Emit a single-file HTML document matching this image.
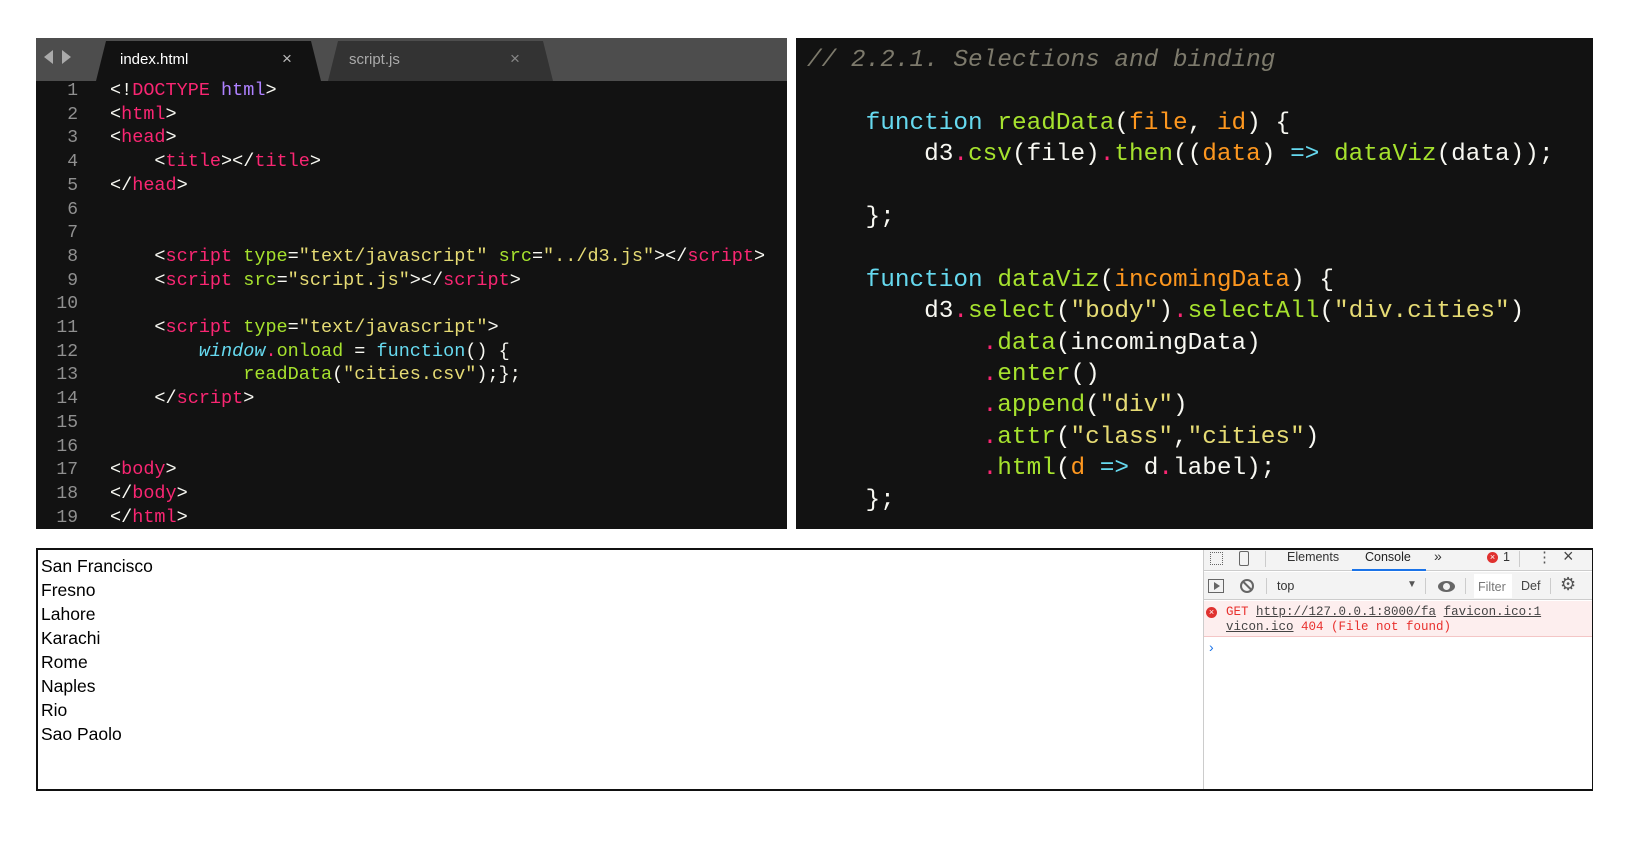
<!DOCTYPE html>
<html><head><style>
*{margin:0;padding:0;box-sizing:border-box}
body{width:1636px;height:844px;background:#fff;position:relative;overflow:hidden;font-family:"Liberation Sans",sans-serif}
.ed{position:absolute;background:#121212;overflow:hidden}
.l{position:absolute;white-space:pre;font-family:"Liberation Mono",monospace;color:#f8f8f2}
.n{position:absolute;white-space:pre;font-family:"Liberation Mono",monospace;color:#909090;text-align:right;width:40px}
.p{color:#f92672}.u{color:#ae81ff}.g{color:#a6e22e}.y{color:#e6db74}.c{color:#66d9ef}.o{color:#fd971f}.i{font-style:italic}
.dt{position:absolute;font-size:12.5px;color:#333;white-space:nowrap}
#D{position:absolute;left:0;top:0;width:1636px;height:844px;transform:translate(-6px,-2px)}
</style></head><body>
<div class="ed" style="left:36px;top:38px;width:751px;height:491px">
 <div style="position:absolute;left:0;top:0;width:751px;height:43px;background:#4d4d4d"></div>
 <div style="position:absolute;left:8px;top:12px;width:0;height:0;border-top:7px solid transparent;border-bottom:7px solid transparent;border-right:9px solid #aaa"></div>
 <div style="position:absolute;left:26px;top:12px;width:0;height:0;border-top:7px solid transparent;border-bottom:7px solid transparent;border-left:9px solid #aaa"></div>
 <div style="position:absolute;left:292px;top:3px;width:225px;height:40px;background:#333;clip-path:polygon(10px 0,calc(100% - 10px) 0,100% 100%,0 100%)"></div>
 <div style="position:absolute;left:60px;top:3px;width:225px;height:40px;background:#121212;clip-path:polygon(10px 0,calc(100% - 10px) 0,100% 100%,0 100%)"></div>
 <div style="position:absolute;left:84px;top:13px;color:#fff;font-size:15px">index.html</div>
 <div style="position:absolute;left:246px;top:11px;color:#bbb;font-size:17px">×</div>
 <div style="position:absolute;left:313px;top:13px;color:#aaa;font-size:15px">script.js</div>
 <div style="position:absolute;left:474px;top:11px;color:#888;font-size:17px">×</div>
</div>
<div id="L"></div>
<div class="ed" style="left:796px;top:38px;width:797px;height:491px"></div>
<div id="R"></div>
<div style="position:absolute;left:36px;top:548px;width:1557px;height:243px;border:2px solid #111"></div>
<div style="position:absolute;left:41px;top:554px;font-size:17.5px;line-height:24px;color:#000">San Francisco<br>Fresno<br>Lahore<br>Karachi<br>Rome<br>Naples<br>Rio<br>Sao Paolo</div>
<div id="D">
<div style="position:absolute;left:1209px;top:552px;width:389px;height:239px;border-left:1px solid #ccc;background:#fff"></div>
<div style="position:absolute;left:1210px;top:552px;width:388px;height:21px;background:#f3f3f3;border-bottom:1px solid #ccc"></div>
<div style="position:absolute;left:1210px;top:574px;width:388px;height:28px;background:#f3f3f3;border-bottom:1px solid #ccc"></div>
<div style="position:absolute;left:1358px;top:571px;width:74px;height:2px;background:#1a73e8"></div>
<div style="position:absolute;left:1210px;top:603px;width:388px;height:36px;background:#fdeeee;border-bottom:1px solid #f4c6c6"></div>
<div style="position:absolute;left:1216px;top:554px;width:13px;height:13px;border:1.5px dotted #666"></div>
<div style="position:absolute;left:1245px;top:553px;width:10px;height:15px;border:1.5px solid #666;border-radius:2px"></div>
<div style="position:absolute;left:1271px;top:553px;width:1px;height:16px;background:#ccc"></div>
<div class="dt" style="left:1293px;top:552px;color:#333">Elements</div>
<div class="dt" style="left:1371px;top:552px;color:#222">Console</div>
<div class="dt" style="left:1440px;top:550px;font-size:14px">»</div>
<div style="position:absolute;left:1493px;top:554px;width:11px;height:11px;border-radius:50%;background:#e0312f;color:#fff;font-size:9px;line-height:11px;text-align:center">×</div>
<div class="dt" style="left:1509px;top:552px">1</div>
<div style="position:absolute;left:1525px;top:553px;width:1px;height:16px;background:#ccc"></div>
<div class="dt" style="left:1543px;top:550px;font-size:15px;color:#555">⋮</div>
<div class="dt" style="left:1569px;top:548px;font-size:18px;color:#444">×</div>
<div style="position:absolute;left:1214px;top:581px;width:16px;height:14px;border:1.5px solid #666"></div>
<div style="position:absolute;left:1220px;top:584px;border-top:4px solid transparent;border-bottom:4px solid transparent;border-left:6px solid #666"></div>
<div style="position:absolute;left:1246px;top:581px;width:14px;height:14px;border:2px solid #666;border-radius:50%"></div>
<div style="position:absolute;left:1248px;top:587px;width:11px;height:2px;background:#666;transform:rotate(45deg)"></div>
<div style="position:absolute;left:1272px;top:580px;width:1px;height:16px;background:#ccc"></div>
<div class="dt" style="left:1283px;top:581px">top</div>
<div class="dt" style="left:1413px;top:581px;font-size:10px;color:#555">▼</div>
<div style="position:absolute;left:1431px;top:580px;width:1px;height:16px;background:#ccc"></div>
<div style="position:absolute;left:1444px;top:583px;width:17px;height:11px;border-radius:50%;background:#666"></div>
<div style="position:absolute;left:1449px;top:585px;width:7px;height:7px;border-radius:50%;background:#f3f3f3"></div>
<div style="position:absolute;left:1471px;top:580px;width:1px;height:16px;background:#ccc"></div>
<div style="position:absolute;left:1480px;top:576px;width:38px;height:24px;background:#fff"></div>
<div class="dt" style="left:1484px;top:582px;color:#777">Filter</div>
<div class="dt" style="left:1527px;top:581px;color:#444">Def</div>
<div style="position:absolute;left:1556px;top:580px;width:1px;height:16px;background:#ccc"></div>
<div class="dt" style="left:1566px;top:576px;font-size:18px;color:#555">⚙</div>
<div style="position:absolute;left:1212px;top:609px;width:11px;height:11px;border-radius:50%;background:#e0312f;color:#fff;font-size:9px;line-height:11px;text-align:center">×</div>
<div class="dt" style="left:1232px;top:607px;font-family:'Liberation Mono',monospace;color:#e8302d;font-size:12.5px;line-height:15px">GET <span style="color:#444;text-decoration:underline">http://127.0.0.1:8000/fa</span> <span style="color:#444;text-decoration:underline">favicon.ico:1</span><br><span style="color:#444;text-decoration:underline">vicon.ico</span> 404 (File not found)</div>
<div class="dt" style="left:1215px;top:641px;color:#1a73e8;font-size:14px">›</div>
</div>
<script>
const L=[
'<span>&lt;!</span><span class="p">DOCTYPE</span> <span class="u">html</span>&gt;',
'&lt;<span class="p">html</span>&gt;',
'&lt;<span class="p">head</span>&gt;',
'    &lt;<span class="p">title</span>&gt;&lt;/<span class="p">title</span>&gt;',
'&lt;/<span class="p">head</span>&gt;','','',
'    &lt;<span class="p">script</span> <span class="g">type</span>=<span class="y">"text/javascript"</span> <span class="g">src</span>=<span class="y">"../d3.js"</span>&gt;&lt;/<span class="p">script</span>&gt;',
'    &lt;<span class="p">script</span> <span class="g">src</span>=<span class="y">"script.js"</span>&gt;&lt;/<span class="p">script</span>&gt;','',
'    &lt;<span class="p">script</span> <span class="g">type</span>=<span class="y">"text/javascript"</span>&gt;',
'        <span class="c i">window</span><span class="p">.</span><span class="g">onload</span> = <span class="c">function</span>() {',
'            <span class="g">readData</span>(<span class="y">"cities.csv"</span>);};',
'    &lt;/<span class="p">script</span>&gt;','','',
'&lt;<span class="p">body</span>&gt;','&lt;/<span class="p">body</span>&gt;','&lt;/<span class="p">html</span>&gt;'];
let h='';
L.forEach((s,k)=>{const y=91+23.7*k-12;
h+=`<div class="n" style="left:38px;top:${y}px;font-size:18px;line-height:24px">${k+1}</div>`;
if(s)h+=`<div class="l" style="left:110px;top:${y}px;font-size:18.5px;line-height:24px">${s}</div>`;});
document.getElementById('L').innerHTML=h;
const R={0:'<span class="i" style="color:#7d7a6c">// 2.2.1. Selections and binding</span>',
2:'    <span class="c">function</span> <span class="g">readData</span>(<span class="o">file</span>, <span class="o">id</span>) {',
3:'        d3<span class="p">.</span><span class="g">csv</span>(file)<span class="p">.</span><span class="g">then</span>((<span class="o">data</span>) <span class="c">=&gt;</span> <span class="g">dataViz</span>(data));',
5:'    };',
7:'    <span class="c">function</span> <span class="g">dataViz</span>(<span class="o">incomingData</span>) {',
8:'        d3<span class="p">.</span><span class="g">select</span>(<span class="y">"body"</span>)<span class="p">.</span><span class="g">selectAll</span>(<span class="y">"div.cities"</span>)',
9:'            <span class="p">.</span><span class="g">data</span>(incomingData)',
10:'            <span class="p">.</span><span class="g">enter</span>()',
11:'            <span class="p">.</span><span class="g">append</span>(<span class="y">"div"</span>)',
12:'            <span class="p">.</span><span class="g">attr</span>(<span class="y">"class"</span>,<span class="y">"cities"</span>)',
13:'            <span class="p">.</span><span class="g">html</span>(<span class="o">d</span> <span class="c">=&gt;</span> d<span class="p">.</span>label);',
14:'    };'};
h='';
for(const k in R){const y=61+31.4*k-16;h+=`<div class="l" style="left:807px;top:${y}px;font-size:24.4px;line-height:32px">${R[k]}</div>`;}
document.getElementById('R').innerHTML=h;
</script>
</body></html>
